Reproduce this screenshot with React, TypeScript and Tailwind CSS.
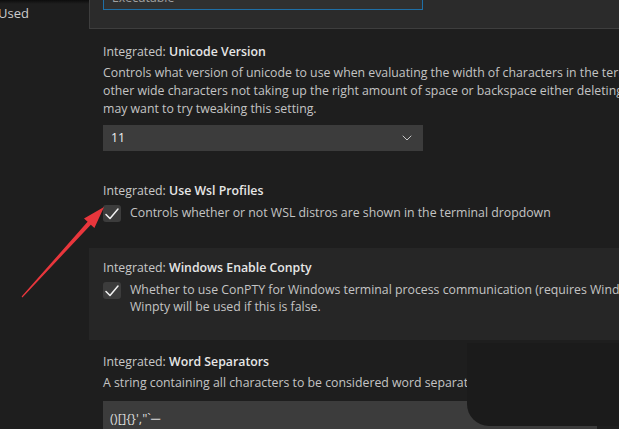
import { ChevronDown } from "lucide-react";

const font = { fontFamily: '"Segoe UI", "Open Sans", sans-serif' };

const Title = ({ name }: { name: string }) => (
  <div className="h-[18px] leading-[18px] whitespace-nowrap text-[#c8c8c8]">
    Integrated: <span className="font-semibold text-[#e7e7e7]">{name}</span>
  </div>
);

const Check = () => (
  <div className="w-[18px] h-[17px] shrink-0 mt-[1px] rounded-[3px] bg-[#3c3c3c] flex items-center justify-center">
    <svg width="16" height="16" viewBox="0 0 16 16" fill="none">
      <path d="M2 8.5 L6 12.5 L14 3" stroke="#f2f2f2" strokeWidth="1.5" strokeLinecap="round" strokeLinejoin="round" />
    </svg>
  </div>
);

export default function App() {
  return (
    <div
      className="relative w-[619px] h-[429px] overflow-hidden bg-[#1e1e1e] flex text-[12.3px] text-[#c4c4c4]"
      style={font}
    >
      {/* sidebar */}
      <div className="w-[89px] shrink-0 relative">
        <div className="absolute top-0 left-0 right-0 h-[4px] bg-gradient-to-b from-black/60 to-transparent" />
        <div className="pt-[4px] -ml-[2px] leading-[18px] text-[13px] text-[#cccccc]">Used</div>
      </div>

      {/* settings list */}
      <div className="flex-1 min-w-0 flex flex-col overflow-hidden">
        {/* focused row, scrolled off */}
        <div className="h-[29px] shrink-0 bg-[#2b2b2b] border-l border-b border-[#3e3e3e] pl-[13px]">
          <div className="-mt-[19px] w-[320px] h-[29px] border border-[#1f6fa6] bg-[#303030] px-[8px] pt-[7px] text-[#a0a0a0] leading-[18px]">
            Executable
          </div>
        </div>

        {/* unicode version */}
        <div className="pl-[14px] pt-[14px] pb-[19px]">
          <Title name="Unicode Version" />
          <div className="mt-[3px] leading-[18px] whitespace-nowrap">
            <div>Controls what version of unicode to use when evaluating the width of characters in the terminal. If you experience emoji or</div>
            <div>other wide characters not taking up the right amount of space or backspace either deleting too much or too little then you</div>
            <div>may want to try tweaking this setting.</div>
          </div>
          <div className="mt-[7px] w-[320px] h-[26px] bg-[#3c3c3c] flex items-center justify-between pl-[8px] pr-[8px] text-[#f0f0f0]">
            <span>11</span>
            <ChevronDown size={16} strokeWidth={1.5} className="text-[#c8c8c8]" />
          </div>
        </div>

        {/* use wsl profiles */}
        <div className="pl-[14px] pt-[12px] pb-[26px]">
          <Title name="Use Wsl Profiles" />
          <div className="mt-[4px] flex gap-[9px]">
            <Check />
            <div className="leading-[18px] whitespace-nowrap">
              Controls whether or not WSL distros are shown in the terminal dropdown
            </div>
          </div>
        </div>

        {/* windows enable conpty (hovered) */}
        <div className="pl-[14px] pt-[11px] pb-[25px] bg-[#262626]">
          <Title name="Windows Enable Conpty" />
          <div className="mt-[4px] flex gap-[9px]">
            <Check />
            <div className="leading-[17px] whitespace-nowrap">
              <div>Whether to use ConPTY for Windows terminal process communication (requires Windows 10 build number 18309+).</div>
              <div>Winpty will be used if this is false.</div>
            </div>
          </div>
        </div>

        {/* word separators */}
        <div className="pl-[14px] pt-[13px]">
          <Title name="Word Separators" />
          <div className="mt-[3px] leading-[18px] whitespace-nowrap">
            A string containing all characters to be considered word separators by the double click to select word feature.
          </div>
          <div className="mt-[9px] w-[494px] h-[30px] bg-[#3c3c3c] px-[7px] pt-[8px] leading-[18px] text-[13px] text-[#d8d8d8]">
            {"()[]{}',\"`─"}
          </div>
        </div>
      </div>

      {/* dark hover overlay at bottom right */}
      <div className="absolute left-[467px] top-[343px] w-[160px] h-[83px] bg-[#1b1b1b] rounded-bl-[22px]" />

      {/* red annotation arrow */}
      <svg className="absolute left-0 top-0 pointer-events-none" width="619" height="429">
        <polygon
          points="21.6,296.6 87.6,221.8 84,218.6 104,207 94.4,228 90.8,224.8 22.4,297.4"
          fill="#e8363c"
        />
      </svg>
    </div>
  );
}
